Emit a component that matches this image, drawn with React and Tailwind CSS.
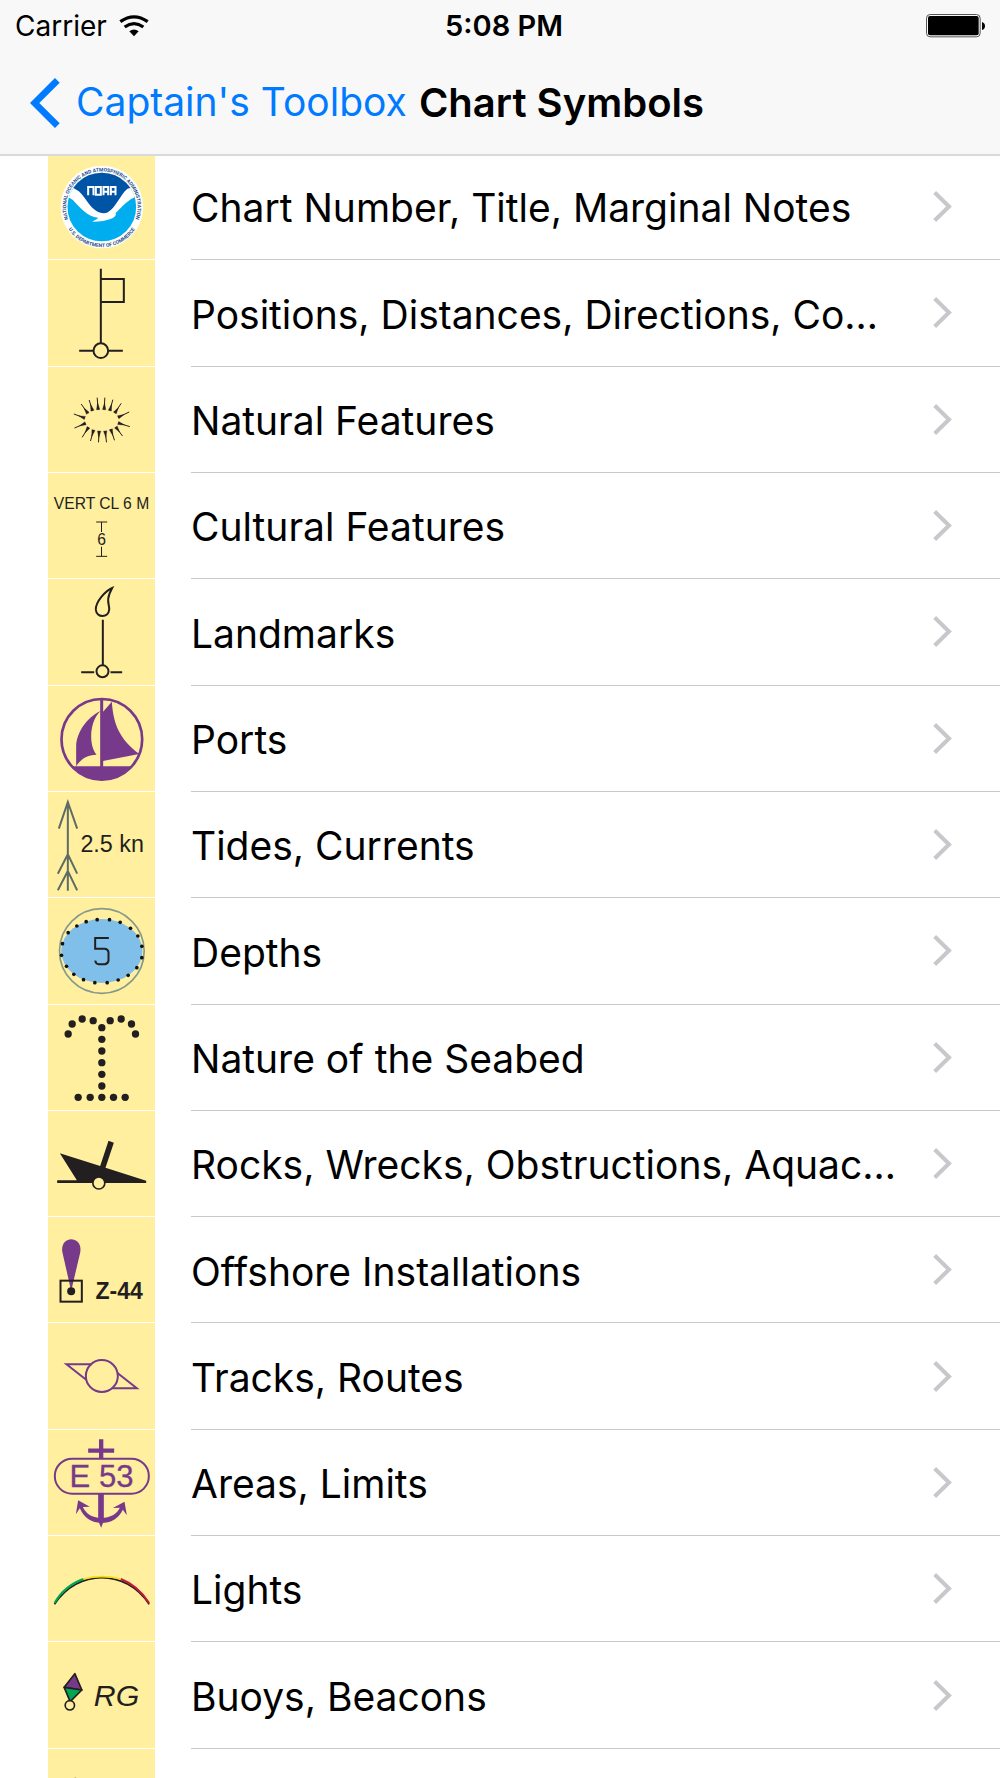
import React from 'react';

const INK = '#231f20';
const PURPLE = '#77398a';
const SANS = '"Liberation Sans", sans-serif';

const NoaaLogo = () => (
  <>
    <defs>
      <path id="noaa-top" d="M 92.3 224.5 A 107 107 0 1 1 277.7 224.5" />
      <path id="noaa-bottom" d="M 75 218 A 119 119 0 0 0 295 218" />
      <clipPath id="noaa-disc">
        <circle cx="185" cy="171" r="103" />
      </clipPath>
    </defs>
    <circle cx="185" cy="171" r="124" fill="#fff" />
    <g clipPath="url(#noaa-disc)">
      <rect x="80" y="66" width="210" height="210" fill="#00aeef" />
      <path d="M 78 60 H 292 V 138 C 262 148 244 172 226 190 C 232 198 214 214 156 215 C 164 210 172 207 174 203 C 140 200 118 170 98 150 Q 90 143 78 140 Z" fill="#fff" />
      <path d="M 80 60 H 290 V 108 L 262 116 C 240 132 222 188 191 190 C 156 190 140 146 116 124 L 96 112 L 80 108 Z" fill="#0054a6" />
    </g>
    <g fill="none" stroke="#fff" strokeWidth="6">
      <path d="M 144 136 V 111 H 160 V 136" />
      <path d="M 167 111 H 182 V 134 H 167 Z" />
      <path d="M 190 136 V 111 H 204 V 136 M 190 125 H 204" />
      <path d="M 212 136 V 111 H 226 V 136 M 212 125 H 226" />
    </g>
    <g fill="#1f4e8c" fontFamily="Roboto, sans-serif" fontWeight="700" fontSize="15">
      <text>
        <textPath href="#noaa-top" startOffset="50%" textAnchor="middle">
          NATIONAL OCEANIC AND ATMOSPHERIC ADMINISTRATION
        </textPath>
      </text>
      <text>
        <textPath href="#noaa-bottom" startOffset="50%" textAnchor="middle">
          U.S. DEPARTMENT OF COMMERCE
        </textPath>
      </text>
    </g>
  </>
);

const Flag = () => (
  <g fill="none" stroke={INK} strokeWidth="6">
    <path d="M 182 357 V 580 M 182 388 H 251 V 457 H 182 M 117 603 H 160 M 205 603 H 248" />
    <circle cx="182" cy="603" r="22" />
  </g>
);

// Each hachure is a thin line that widens towards the rim: [outer x, outer y, inner x, inner y]
const hachures = [
  [171, 97, 174, 133], [194, 97, 192, 133], [218, 103, 209, 136], [243, 114, 224, 143],
  [267, 140, 234, 156], [269, 184, 234, 173], [247, 212, 227, 185], [223, 225, 212, 192],
  [199, 231, 195, 197], [175, 231, 177, 197], [151, 227, 160, 194], [126, 216, 145, 186],
  [103, 188, 136, 174], [101, 146, 134, 158], [123, 116, 143, 144], [147, 104, 157, 136],
];

const Hill = () => (
  <g fill={INK} stroke={INK}>
    {hachures.map(([x1, y1, x2, y2]) => {
      const len = Math.hypot(x2 - x1, y2 - y1);
      const dx = (x2 - x1) / len;
      const dy = (y2 - y1) / len;
      const mx = x2 - dx * 20;
      const my = y2 - dy * 20;
      const base = `${x2 - dy * 5},${y2 + dx * 5} ${x2 + dy * 5},${y2 - dx * 5}`;
      return (
        <g key={`${x1}-${y1}`}>
          <line x1={x1} y1={y1} x2={x2} y2={y2} strokeWidth="3" />
          <polygon points={`${mx},${my} ${base}`} strokeWidth="1" />
        </g>
      );
    })}
  </g>
);

const Clearance = () => (
  <>
    <g fill={INK} fontFamily={SANS} textAnchor="middle">
      <text x="184" y="432" fontSize="47">VERT CL 6 M</text>
      <text x="184" y="541" fontSize="47">6</text>
    </g>
    <path d="M 168 472 H 201 M 184 472 V 502 M 168 575 H 201 M 184 546 V 575" fill="none" stroke={INK} strokeWidth="3" />
  </>
);

const Flare = () => (
  <g fill="none" stroke={INK} strokeWidth="6">
    <path d="M 216 40 C 196 48 166 82 167 105 C 169 130 205 131 207 105 C 209 88 194 80 216 40 Z" />
    <path d="M 188 135 V 271 M 123 293 H 162 M 211 293 H 246" />
    <circle cx="187" cy="290" r="18" />
  </g>
);

const Sailboat = () => (
  <>
    <circle cx="185" cy="491" r="121" fill="none" stroke={PURPLE} strokeWidth="8" />
    <path d="M 94 572 H 276 A 121 121 0 0 1 94 572 Z" fill={PURPLE} />
    <path d="M 180 370 H 189 V 574 H 180 Z" fill={PURPLE} />
    <path d="M 181 406 C 140 425 110 470 108 510 V 572 C 122 550 140 537 169 537 C 146 510 146 440 181 406 Z" fill={PURPLE} />
    <path d="M 188 409 L 215 378 C 220 450 240 490 297 535 L 188 556 Z" fill={PURPLE} />
  </>
);

const Current = () => (
  <>
    <path d="M 83 48 V 316 M 56 130 L 83 50 L 111 130 M 53 265 L 83 207 L 111 265 M 53 315 L 83 257 L 111 315" fill="none" stroke="#5d6d66" strokeWidth="6" />
    <text x="216" y="201" fill={INK} fontFamily={SANS} fontSize="70" textAnchor="middle">2.5 kn</text>
  </>
);

const depthDots = [
  [171, 405], [208, 405], [240, 413], [271, 431], [293, 454], [305, 485], [305, 519], [290, 549],
  [264, 572], [234, 586], [201, 594], [164, 594], [130, 585], [101, 569], [79, 545], [64, 512],
  [67, 477], [84, 444], [110, 424], [138, 411],
];

const Depth = () => (
  <>
    <ellipse cx="185" cy="499" rx="122" ry="96" fill="#80bfea" />
    <circle cx="185" cy="499" r="127" fill="none" stroke="#869a8c" strokeWidth="5" />
    {depthDots.map(([x, y]) => (
      <circle key={`${x}-${y}`} cx={x} cy={y} r="5.5" fill="#111" />
    ))}
    <path d="M 206 460 H 165 V 492 H 194 Q 205 494 205 504 V 527 Q 204 537 194 539 H 176 Q 167 538 165 528" fill="none" stroke={INK} strokeWidth="6" />
  </>
);

const seabedDots = [
  [84, 100], [96, 70], [126, 55], [159, 60], [210, 60], [243, 55], [274, 70], [286, 100],
  [185, 81], [185, 116], [185, 151], [185, 186], [185, 221], [185, 256],
  [114, 290], [150, 290], [185, 290], [220, 290], [255, 290],
];

const Seabed = () => (
  <g fill={INK}>
    {seabedDots.map(([x, y]) => (
      <circle key={`${x}-${y}`} cx={x} cy={y} r="11" />
    ))}
  </g>
);

const Wreck = () => (
  <>
    <path d="M 59 458 L 180 496 L 205 420 L 221 426 L 196 501 L 318 540 V 547 H 51 V 539 H 110 Z" fill={INK} />
    <circle cx="176" cy="547" r="18" fill="#ffef9f" stroke={INK} strokeWidth="5" />
  </>
);

const Platform = () => (
  <>
    <path d="M 93 243 L 67 128 C 56 74 130 74 120 128 Z" fill={PURPLE} />
    <rect x="61" y="212" width="64" height="63" fill="none" stroke={INK} strokeWidth="6" />
    <circle cx="93" cy="244" r="12" fill={INK} />
    <text x="237" y="267" fill={INK} fontFamily={SANS} fontSize="69" fontWeight="700" textAnchor="middle">Z-44</text>
  </>
);

const Track = () => (
  <g fill="none" stroke={PURPLE} strokeWidth="6">
    <path d="M 155 464 H 79 L 139 511 M 231 489 L 290 536 H 216" />
    <circle cx="185" cy="499" r="48" />
  </g>
);

const Anchor = () => (
  <>
    <rect x="44" y="99" width="282" height="105" rx="52" fill="none" stroke={PURPLE} strokeWidth="6" />
    <path d="M 183 41 V 99 M 144 75 H 222" fill="none" stroke={PURPLE} strokeWidth="13" />
    <text x="184" y="184" fill={PURPLE} stroke={PURPLE} strokeWidth="1" fontFamily={SANS} fontSize="93" textAnchor="middle">E 53</text>
    <g fill={PURPLE}>
      <path d="M 174 203 H 191 V 285 L 183 306 L 174 285 Z" />
      <path d="M 114 224 L 149 243 L 128 244 C 138 265 155 276 183 277 C 211 276 230 265 239 246 L 218 247 L 253 228 L 260 269 L 248 252 C 236 278 212 292 183 292 C 155 291 132 278 119 248 L 107 266 Z" />
    </g>
  </>
);

const LightArc = () => (
  <g fill="none">
    <path d="M 43 537 C 112 430 258 430 327 537" stroke="#231f20" strokeWidth="5" />
    <path d="M 43 533 Q 74 480 130 461" stroke="#00a651" strokeWidth="6" />
    <path d="M 130 461 Q 185 447 242 461" stroke="#f5e014" strokeWidth="5" />
    <path d="M 242 461 Q 292 480 327 533" stroke="#c4163a" strokeWidth="6" />
  </g>
);

const Buoy = () => (
  <>
    <g stroke={INK} strokeWidth="5" strokeLinejoin="round">
      <path d="M 104 221 L 125 270 L 72 262 Z" fill={PURPLE} />
      <path d="M 72 262 L 125 270 L 90 305 Z" fill="#00a651" />
      <circle cx="89" cy="316" r="14" fill="#ffef9f" />
    </g>
    <text x="229" y="319" fill={INK} fontFamily={SANS} fontSize="91" fontStyle="italic" textAnchor="middle">RG</text>
  </>
);

const FogSignal = () => <path d="M 101 536 L 105 530 L 109 536 Z" fill={INK} />;

// top is where each drawing's tile starts on the symbol sheet
const symbols = [
  { title: 'Chart Number, Title, Marginal Notes', Icon: NoaaLogo, top: 12 },
  { title: 'Positions, Distances, Directions, Co…', Icon: Flag, top: 331 },
  { title: 'Natural Features', Icon: Hill, top: 5 },
  { title: 'Cultural Features', Icon: Clearance, top: 325 },
  { title: 'Landmarks', Icon: Flare, top: 13 },
  { title: 'Ports', Icon: Sailboat, top: 331 },
  { title: 'Tides, Currents', Icon: Current, top: 20 },
  { title: 'Depths', Icon: Depth, top: 340 },
  { title: 'Nature of the Seabed', Icon: Seabed, top: 13 },
  { title: 'Rocks, Wrecks, Obstructions, Aquac…', Icon: Wreck, top: 331 },
  { title: 'Offshore Installations', Icon: Platform, top: 21 },
  { title: 'Tracks, Routes', Icon: Track, top: 340 },
  { title: 'Areas, Limits', Icon: Anchor, top: 13 },
  { title: 'Lights', Icon: LightArc, top: 332 },
  { title: 'Buoys, Beacons', Icon: Buoy, top: 126 },
  { title: '', Icon: FogSignal, top: 445 },
];

const StatusBar = () => (
  <div className="grid grid-cols-3 items-center h-[51px] px-[15px] text-[28px]">
    <div className="flex items-center gap-3">
      <span>Carrier</span>
      <svg viewBox="0 0 90 66" className="w-[30px] h-[22px]" fill="none" stroke="#000" strokeWidth="10">
        <path d="M 4 20 Q 45 -9 86 20" />
        <path d="M 17 36 Q 45 16 73 36" />
        <path d="M 31 49 Q 45 38 59 49 L 45 64 Z" fill="#000" stroke="none" />
      </svg>
    </div>
    <div className="pl-2 text-center text-[29px] font-semibold">5:08 PM</div>
    <svg viewBox="0 0 177 72" className="w-[59px] h-6 justify-self-end">
      <rect x="1.5" y="1.5" width="161" height="67" rx="11" fill="none" stroke="#555" strokeWidth="3" />
      <rect x="6" y="6" width="152" height="58" rx="6" />
      <path d="M 168 24 Q 177 27 177 36 Q 177 45 168 48 Z" />
    </svg>
  </div>
);

const SymbolRow = ({ title, Icon, top }) => (
  <li>
    <a href="#" className="flex h-full pl-12">
      <div className="w-[107px] mr-9 shrink-0 bg-[#ffef9f] shadow-[inset_0_-1px_0_#fff]">
        <svg viewBox={`24 ${top} 320 318`} className="block w-full h-[106px]">
          <Icon />
        </svg>
      </div>
      <div className="flex flex-1 min-w-0 items-center justify-between border-b border-[#c8c7cc] pr-12">
        <span className="pt-1 whitespace-nowrap">{title}</span>
        {title && (
          <svg viewBox="0 0 57 92" className="w-[19px] h-[31px] shrink-0" fill="none" stroke="#c7c7cc" strokeWidth="12">
            <path d="M 5 4 L 48 46 L 5 88" />
          </svg>
        )}
      </div>
    </a>
  </li>
);

function App() {
  return (
    <div className="h-screen overflow-hidden bg-white text-black font-['Inter',sans-serif]">
      {/* The header's bottom rule lies over the first row */}
      <header className="relative z-10 -mb-0.5 bg-[#f8f8f8] border-b-2 border-[#d9d9d9]">
        <StatusBar />
        <nav className="flex items-center h-[103px] pl-[30px] text-[39px]">
          <a href="#" className="flex items-center gap-4 text-[#007aff]">
            <svg viewBox="0 0 90 150" className="w-[30px] h-[50px]" fill="none" stroke="#007aff" strokeWidth="20">
              <path d="M 82 7 L 14 75 L 82 143" />
            </svg>
            <span>Captain's Toolbox</span>
          </a>
          <h1 className="ml-3 text-[40px] font-semibold">Chart Symbols</h1>
        </nav>
      </header>

      {/* Rows share the list height equally */}
      <ul className="grid auto-rows-fr min-h-[1701px] text-[39px]">
        {symbols.map((symbol) => (
          <SymbolRow key={symbol.top + symbol.title} {...symbol} />
        ))}
      </ul>
    </div>
  );
}

export default App;
